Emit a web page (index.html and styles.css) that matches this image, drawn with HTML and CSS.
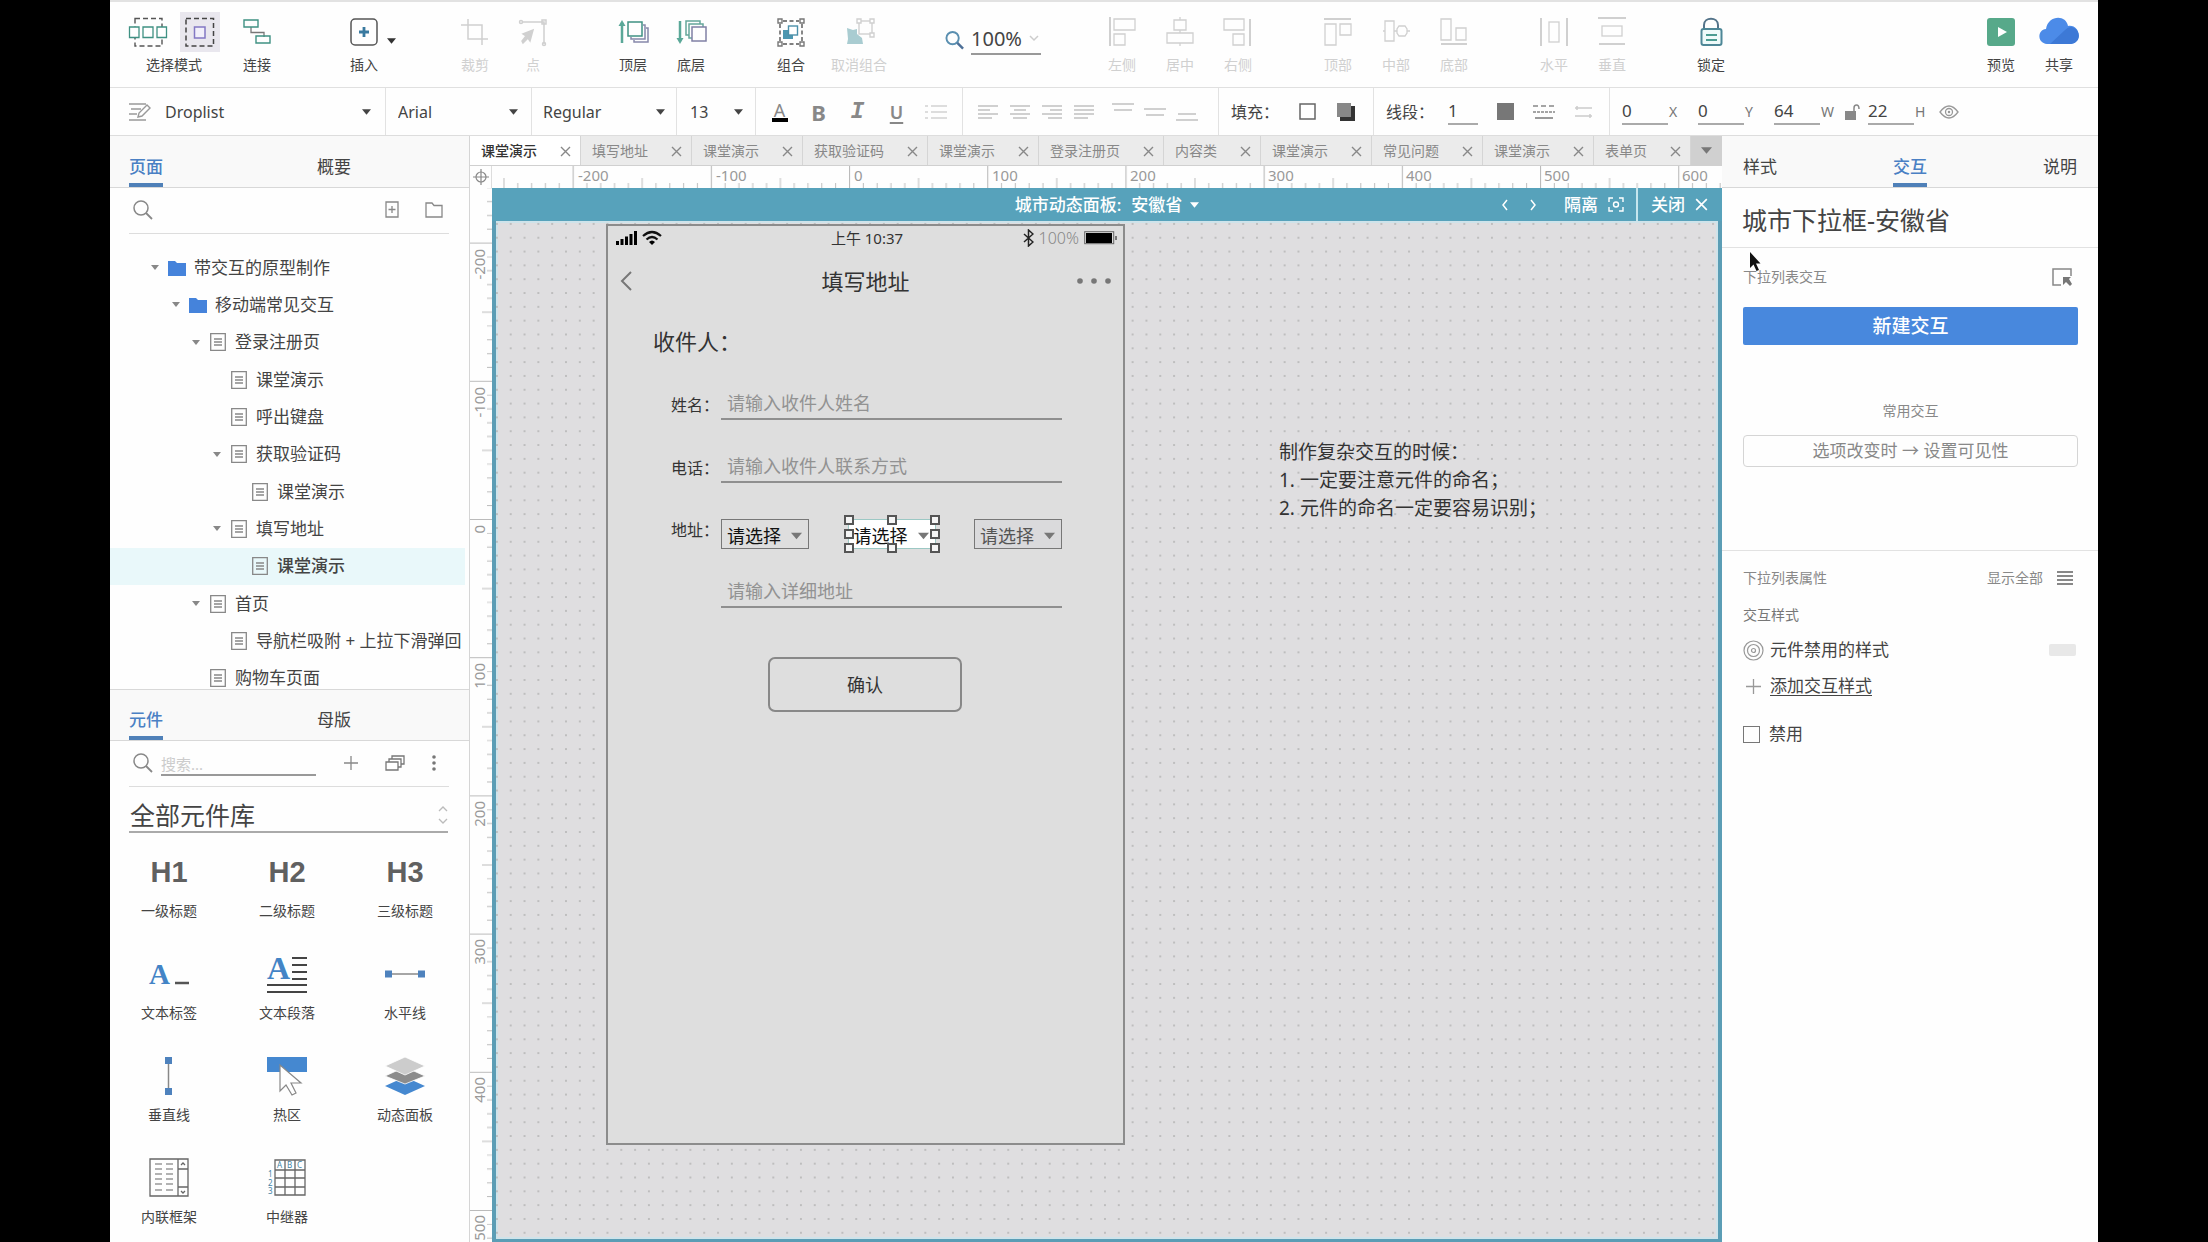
FILE: index.html
```html
<!DOCTYPE html>
<html lang="zh-CN">
<head>
<meta charset="utf-8">
<title>课堂演示</title>
<meta name="viewport" content="width=device-width, initial-scale=1">
<link rel="stylesheet" href="styles.css">
</head>
<body>
<svg class="defs" width="0" height="0" aria-hidden="true">
  <symbol id="caret" viewBox="0 0 10 6"><path d="M0 0H10L5 6Z" fill="currentColor"/></symbol>
  <symbol id="close" viewBox="0 0 11 11"><path d="M1 1L10 10M10 1L1 10" fill="none" stroke="currentColor" stroke-width="1.4"/></symbol>
  <symbol id="page" viewBox="0 0 18 20"><path d="M1.7 1.7H16.3V18.3H1.7ZM5 7H13M5 10H13M5 13H13" fill="none" stroke="currentColor" stroke-width="1.3"/></symbol>
  <symbol id="folder" viewBox="0 0 18 16"><path d="M0 1H7L9 3H18V16H0Z" fill="#4583db"/></symbol>
  <symbol id="search" viewBox="0 0 20 20"><circle cx="8" cy="8" r="7" fill="none" stroke="currentColor" stroke-width="1.5"/><path d="M13 13L19 19" stroke="currentColor" stroke-width="1.8"/></symbol>
</svg>
<div class="app">
  <header class="toolbar">
    <div class="group modes">
      <div class="pair">
        <button aria-label="相交选择"><svg width="40" height="40" viewBox="0 0 40 40"><path d="M7 6.5H34V34H7Z" fill="none" stroke="#555" stroke-width="1.4" stroke-dasharray="5 3"/><g fill="#fff" stroke="#3f9183" stroke-width="1.3"><path d="M1.5 15H11V25.500H1.500Z"/><path d="M15 15H25V25.500H15Z"/><path d="M29 15H38.500V25.500H29Z"/></g></svg></button>
        <button class="on" aria-label="包含选择"><svg width="40" height="40" viewBox="0 0 40 40"><path d="M6 6.500H33.500V34H6Z" fill="none" stroke="#444" stroke-width="1.500" stroke-dasharray="5 3"/><path d="M14.500 15H25V26H14.500Z" fill="#f1effa" stroke="#8378c4" stroke-width="1.500"/></svg></button>
      </div>
      <span>选择模式</span>
    </div>
    <button class="tool"><svg width="40" height="40" viewBox="0 0 40 40" fill="none"><path d="M14 15V20.500H27V25" stroke="#777" stroke-width="1.300"/><path d="M7 8H21V15H7ZM19 24H33V31H19Z" stroke="#3f9183" stroke-width="1.400"/></svg>连接</button>
    <div class="group insert">
      <button class="tool"><svg width="40" height="40" viewBox="0 0 40 40" fill="none"><rect x="7" y="7" width="26" height="26" rx="4" stroke="#555" stroke-width="1.500"/><path d="M20 15V25M15 20H25" stroke="#39799f" stroke-width="2.800"/></svg>插入</button>
      <button class="drop" aria-label="更多插入"><svg width="9" height="6"><use href="#caret"/></svg></button>
    </div>
    <div class="group">
      <button class="tool" disabled><svg width="40" height="40" viewBox="0 0 40 40" fill="none" stroke="currentColor" stroke-width="1.500"><path d="M13 7V27H33M6 13H27V33"/></svg>裁剪</button>
      <button class="tool" disabled><svg width="40" height="40" viewBox="0 0 40 40" fill="none" stroke="currentColor" stroke-width="1.500"><path d="M9 10H31V32"/><path d="M20 18L17 29L15 26L10 31L9 29L13 24L10 22Z" fill="currentColor"/><circle cx="8" cy="10" r="1.500"/><path d="M29 8H33V12H29Z"/><circle cx="31" cy="32" r="1.500"/></svg>点</button>
    </div>
    <div class="group">
      <button class="tool"><svg width="40" height="40" viewBox="0 0 40 40" fill="none" stroke-width="1.500"><path d="M9 31V11" stroke="#5aa898" stroke-width="2.500"/><path d="M5.500 14L9 8L12.500 14Z" fill="#5aa898"/><g stroke="#8788aa"><path d="M18 25V27H32V13H30M21 28V30H35V16H33"/></g><rect x="15" y="10" width="14" height="14" stroke="#3f9183"/></svg>顶层</button>
      <button class="tool"><svg width="40" height="40" viewBox="0 0 40 40" fill="none" stroke-width="1.500"><path d="M9 9V28" stroke="#5aa898" stroke-width="2.500"/><path d="M5.500 26L9 32L12.500 26Z" fill="#5aa898"/><path d="M18 23H15V9H29V12M21 26H18V12H32V15" stroke="#65a79b"/><rect x="21" y="15" width="14" height="14" stroke="#8080a5"/></svg>底层</button>
    </div>
    <div class="group">
      <button class="tool"><svg width="40" height="40" viewBox="0 0 40 40" fill="none" stroke-width="1.400"><path d="M12 9H28M12 32H28M9 12V29M31 12V29" stroke="#555" stroke-dasharray="4 2.500"/><path d="M7 7H11V11H7ZM29 7H33V11H29ZM7 30H11V34H7ZM29 30H33V34H29Z" stroke="#777"/><rect x="12" y="18" width="10" height="9" fill="#4d97b0"/><rect x="17.500" y="14" width="9" height="9" fill="#fff" stroke="#4a8fa9"/></svg>组合</button>
      <button class="tool wide" disabled><svg width="40" height="40" viewBox="0 0 40 40" fill="none" stroke="currentColor" stroke-width="1.400"><rect x="20" y="9" width="13" height="13"/><path d="M18 7H22V11H18ZM31 7H35V11H31ZM31 21H35V25H31Z" fill="#fff"/><path d="M8 16L14 18L18 17V22L23 26L24 32H8L9 27Z" fill="#a9ccd1" stroke="none"/></svg>取消组合</button>
    </div>
    <label class="zoom"><svg width="19" height="20" viewBox="0 0 20 20"><circle cx="8" cy="8" r="6.500" fill="none" stroke="#5a8fb0" stroke-width="2"/><path d="M13 13L19 19" stroke="#4d6f97" stroke-width="2.600"/></svg><span class="zoombox"><input value="100%" aria-label="缩放"><svg width="10" height="7" viewBox="0 0 10 7"><path d="M1 1L5 5L9 1" fill="none" stroke="#ccc" stroke-width="1.500"/></svg></span></label>
    <div class="group">
      <button class="tool" disabled><svg width="40" height="40" viewBox="0 0 40 40" fill="none" stroke="currentColor" stroke-width="1.300"><path d="M8 5V34" stroke-width="2"/><path d="M12 7H33V18H12ZM12 22H23V33H12Z"/></svg>左侧</button>
      <button class="tool" disabled><svg width="40" height="40" viewBox="0 0 40 40" fill="none" stroke="currentColor" stroke-width="1.300"><path d="M20 5V8M20 18V21M20 31V34M14 8H26V18H14ZM7 21H33V31H7Z"/></svg>居中</button>
      <button class="tool" disabled><svg width="40" height="40" viewBox="0 0 40 40" fill="none" stroke="currentColor" stroke-width="1.300"><path d="M32 7V34" stroke-width="2"/><path d="M6 7H26V18H6ZM15 22H26V33H15Z"/></svg>右侧</button>
    </div>
    <div class="group">
      <button class="tool" disabled><svg width="40" height="40" viewBox="0 0 40 40" fill="none" stroke="currentColor" stroke-width="1.300"><path d="M6 7H33" stroke-width="2"/><path d="M7 12H18V33H7ZM22 12H33V23H22Z"/></svg>顶部</button>
      <button class="tool" disabled><svg width="40" height="40" viewBox="0 0 40 40" fill="none" stroke="currentColor" stroke-width="1.300"><path d="M7 19H9M18 19H21M31 19H34M9 9H18V29H9ZM23 14H29L31 17V21L29 24H23L21 21V17Z"/></svg>中部</button>
      <button class="tool" disabled><svg width="40" height="40" viewBox="0 0 40 40" fill="none" stroke="currentColor" stroke-width="1.300"><path d="M7 32H33" stroke-width="2"/><path d="M7 7H17V28H7ZM22 16H32V28H22Z"/></svg>底部</button>
    </div>
    <div class="group">
      <button class="tool" disabled><svg width="40" height="40" viewBox="0 0 40 40" fill="none" stroke="currentColor" stroke-width="1.300"><path d="M7 6V34M33 6V34" stroke-width="2"/><rect x="15" y="10" width="10" height="20"/></svg>水平</button>
      <button class="tool" disabled><svg width="40" height="40" viewBox="0 0 40 40" fill="none" stroke="currentColor" stroke-width="1.300"><path d="M6 6H34M7 32H33" stroke-width="2"/><rect x="10" y="14" width="20" height="10"/></svg>垂直</button>
    </div>
    <button class="tool lock"><svg width="40" height="40" viewBox="0 0 40 40" fill="none"><path d="M13 18V13C13 4.500 27 4.500 27 13V18" stroke="#54748a" stroke-width="2"/><rect x="10.500" y="17" width="20" height="16" rx="2" fill="#eefafa" stroke="#4e8797" stroke-width="2"/><path d="M15 23H26M15 28H26" stroke="#4b9c92" stroke-width="2"/></svg>锁定</button>
    <div class="group end">
      <button class="tool"><svg width="40" height="40" viewBox="0 0 40 40"><rect x="6" y="6" width="28" height="28" rx="3" fill="#57a98a"/><path d="M17 15V25L26 20Z" fill="#fff"/></svg>预览</button>
      <button class="tool"><svg width="42" height="40" viewBox="0 0 42 40"><path d="M9 32C-1 31-1 18 8 17C10 3 28 2 30 14C42 12 45 30 33 32Z" fill="#4c8be8"/><path d="M12 32L27 18Q32 13 36 16C43 19 43 31 33 32Z" fill="#3d79d6"/></svg>共享</button>
    </div>
  </header>

  <div class="format">
    <div class="sec style">
      <svg width="22" height="20" viewBox="0 0 22 20" fill="none" stroke="#999" stroke-width="1.400"><path d="M0 2H17M2 7H12M0 12H8M0 18H17"/><path d="M9 15L10 11L18 3L21 6L13 14Z" fill="#fff"/></svg>
      <span class="pick"><select aria-label="样式"><option>Droplist</option></select><svg width="9" height="6"><use href="#caret"/></svg></span>
    </div>
    <div class="sec font"><span class="pick"><select aria-label="字体"><option>Arial</option></select><svg width="9" height="6"><use href="#caret"/></svg></span></div>
    <div class="sec weight"><span class="pick"><select aria-label="字重"><option>Regular</option></select><svg width="9" height="6"><use href="#caret"/></svg></span></div>
    <div class="sec size"><span class="pick"><select aria-label="字号"><option>13</option></select><svg width="9" height="6"><use href="#caret"/></svg></span></div>
    <div class="sec marks">
      <button aria-label="文字颜色"><span class="ink">A</span></button>
      <button class="b">B</button>
      <button class="it">I</button>
      <button class="u">U</button>
      <button class="dim" aria-label="列表"><svg width="22" height="16" viewBox="0 0 22 16" stroke="currentColor" stroke-width="2"><path d="M0 2H3M0 8H3M0 14H3M6 2H22M6 8H22M6 14H22"/></svg></button>
    </div>
    <div class="sec aligns">
      <button aria-label="左对齐"><svg width="20" height="16" viewBox="0 0 20 16" stroke="currentColor" stroke-width="1.800"><path d="M0 2H20M0 6H12M0 10H20M0 14H14"/></svg></button>
      <button aria-label="居中对齐"><svg width="20" height="16" viewBox="0 0 20 16" stroke="currentColor" stroke-width="1.800"><path d="M0 2H20M4 6H16M0 10H20M3 14H17"/></svg></button>
      <button aria-label="右对齐"><svg width="20" height="16" viewBox="0 0 20 16" stroke="currentColor" stroke-width="1.800"><path d="M0 2H20M8 6H20M0 10H20M6 14H20"/></svg></button>
      <button aria-label="两端对齐"><svg width="20" height="16" viewBox="0 0 20 16" stroke="currentColor" stroke-width="1.800"><path d="M0 2H20M0 6H20M0 10H20M0 14H14"/></svg></button>
      <button class="gap" aria-label="顶端"><svg width="22" height="20" viewBox="0 0 22 20" stroke="currentColor" stroke-width="1.800"><path d="M0 2H22M2 8H20"/></svg></button>
      <button aria-label="中部"><svg width="22" height="20" viewBox="0 0 22 20" stroke="currentColor" stroke-width="1.800"><path d="M0 7H22M2 13H20"/></svg></button>
      <button aria-label="底端"><svg width="22" height="20" viewBox="0 0 22 20" stroke="currentColor" stroke-width="1.800"><path d="M2 12H20M0 18H22"/></svg></button>
    </div>
    <div class="sec fill"><span class="name">填充：</span>
      <button aria-label="填充颜色"><svg width="18" height="18"><rect x="1" y="1" width="15" height="15" fill="#fff" stroke="#666" stroke-width="1.500"/></svg></button>
      <button aria-label="阴影"><svg width="18" height="18"><path d="M3 3H18V18H3Z" fill="#333"/><path d="M0 0H14V14H0Z" fill="#888"/></svg></button>
    </div>
    <div class="sec line"><label class="name" for="lw">线段：</label><input id="lw" class="num short" value="1">
      <button aria-label="线段颜色"><svg width="17" height="17"><rect width="17" height="17" fill="#777"/></svg></button>
      <button aria-label="线型"><svg width="22" height="16" viewBox="0 0 22 16" fill="none" stroke="#888" stroke-width="1.700"><path d="M0 2H22" stroke-dasharray="5 3"/><path d="M0 8H22" stroke-dasharray="3 1"/><path d="M2 14H20"/></svg></button>
      <button aria-label="箭头"><svg width="20" height="16" viewBox="0 0 20 16" fill="none" stroke="#ccc" stroke-width="1.500"><path d="M1 4H18M3 2V6M1 12H18M16 10V14"/></svg></button>
    </div>
    <div class="sec coords">
      <label><input class="num" value="0">X</label>
      <label><input class="num" value="0">Y</label>
      <label class="w"><input class="num" value="64">W</label>
      <button class="ratio" aria-label="锁定比例"><svg width="15" height="16" viewBox="0 0 15 16"><path d="M0 7H11V16H0Z" fill="#888"/><path d="M9 7V4Q9 1 11.500 1Q14 1 14 5" fill="none" stroke="#888" stroke-width="1.500"/></svg></button>
      <label class="w"><input class="num" value="22">H</label>
      <button class="eye" aria-label="隐藏"><svg width="20" height="14" viewBox="0 0 20 14" fill="none" stroke="#999" stroke-width="1.300"><path d="M1 7Q10-5 19 7Q10 19 1 7Z"/><circle cx="10" cy="7" r="3.500"/><circle cx="10" cy="7" r=".6"/></svg></button>
    </div>
  </div>

  <main class="work">
    <aside class="left">
      <section class="pane pages">
        <nav class="heads"><button class="on">页面</button><button>概要</button></nav>
        <div class="find">
          <button aria-label="搜索页面"><svg width="20" height="20"><use href="#search"/></svg></button>
          <button class="push" aria-label="添加页面"><svg width="14" height="17" viewBox="0 0 14 17" fill="none" stroke="#888" stroke-width="1.300"><path d="M1 1H13V16H1ZM7 5V12M3.500 8.500H10.500"/></svg></button>
          <button aria-label="添加文件夹"><svg width="18" height="16" viewBox="0 0 18 16" fill="none" stroke="#888" stroke-width="1.300"><path d="M1 1H7L9 3.500H17V15H1Z"/></svg></button>
        </div>
        <ul class="tree">
          <li class="l0"><svg class="tw" width="8" height="7"><use href="#caret"/></svg><svg width="18" height="16"><use href="#folder"/></svg>带交互的原型制作</li>
          <li class="l1"><svg class="tw" width="8" height="7"><use href="#caret"/></svg><svg width="18" height="16"><use href="#folder"/></svg>移动端常见交互</li>
          <li class="l2"><svg class="tw" width="8" height="7"><use href="#caret"/></svg><svg width="18" height="20"><use href="#page"/></svg>登录注册页</li>
          <li class="l3"><i class="tw"></i><svg width="18" height="20"><use href="#page"/></svg>课堂演示</li>
          <li class="l3"><i class="tw"></i><svg width="18" height="20"><use href="#page"/></svg>呼出键盘</li>
          <li class="l3"><svg class="tw" width="8" height="7"><use href="#caret"/></svg><svg width="18" height="20"><use href="#page"/></svg>获取验证码</li>
          <li class="l4"><i class="tw"></i><svg width="18" height="20"><use href="#page"/></svg>课堂演示</li>
          <li class="l3"><svg class="tw" width="8" height="7"><use href="#caret"/></svg><svg width="18" height="20"><use href="#page"/></svg>填写地址</li>
          <li class="l4 cur"><i class="tw"></i><svg width="18" height="20"><use href="#page"/></svg>课堂演示</li>
          <li class="l2"><svg class="tw" width="8" height="7"><use href="#caret"/></svg><svg width="18" height="20"><use href="#page"/></svg>首页</li>
          <li class="l3"><i class="tw"></i><svg width="18" height="20"><use href="#page"/></svg>导航栏吸附 + 上拉下滑弹回</li>
          <li class="l2"><i class="tw"></i><svg width="18" height="20"><use href="#page"/></svg>购物车页面</li>
        </ul>
      </section>
      <section class="pane widgets">
        <nav class="heads"><button class="on">元件</button><button>母版</button></nav>
        <div class="find lib">
          <svg width="20" height="20"><use href="#search"/></svg>
          <input type="text" placeholder="搜索..." aria-label="搜索元件">
          <button class="push" aria-label="添加"><svg width="14" height="14" viewBox="0 0 14 14" stroke="#888" stroke-width="1.300"><path d="M7 0V14M0 7H14"/></svg></button>
          <button aria-label="元件库"><svg width="20" height="17" viewBox="0 0 20 17" fill="#fff" stroke="#777" stroke-width="1.300"><path d="M7 1H19V9H7Z"/><path d="M4 4H16V12H4Z"/><path d="M1 7H13V15H1Z"/></svg></button>
          <button aria-label="选项"><svg width="4" height="16" fill="#777"><circle cx="2" cy="2" r="1.800"/><circle cx="2" cy="8" r="1.800"/><circle cx="2" cy="14" r="1.800"/></svg></button>
        </div>
        <div class="library"><select aria-label="元件库"><option>全部元件库</option></select><svg width="10" height="18" viewBox="0 0 10 18" fill="none" stroke="#bbb" stroke-width="1.300"><path d="M1 5L5 1L9 5M1 13L5 17L9 13"/></svg></div>
        <ul class="grid">
          <li><b>H1</b>一级标题</li>
          <li><b>H2</b>二级标题</li>
          <li><b>H3</b>三级标题</li>
          <li><span class="art"><span class="glyph low">A</span><svg width="15" height="30"><path d="M1 28H15" stroke="#555" stroke-width="2.500"/></svg></span>文本标签</li>
          <li><span class="art para"><span class="glyph">A</span><svg width="15" height="26" stroke="#444" stroke-width="2"><path d="M0 4H15M0 11H15M0 18H15M0 25H15"/></svg><svg class="under" width="40" height="10" stroke="#444" stroke-width="2.200"><path d="M0 2H40M0 9H40"/></svg></span>文本段落</li>
          <li><svg width="40" height="44" viewBox="0 0 40 44"><path d="M4 22H36" stroke="#888" stroke-width="1.500"/><path d="M0 18.500H7V25.500H0ZM33 18.500H40V25.500H33Z" fill="#4e82bd"/></svg>水平线</li>
          <li><svg width="40" height="44" viewBox="0 0 40 44"><path d="M19.500 6V38" stroke="#888" stroke-width="1.500"/><path d="M16 3H23V10H16ZM16 34H23V41H16Z" fill="#4e82bd"/></svg>垂直线</li>
          <li><svg width="40" height="44" viewBox="0 0 40 44"><path d="M0 3H40V18H0Z" fill="#4588d0"/><path d="M13 11V37L19 31L25 41L29 39L24 29H34Z" fill="#fff" stroke="#888" stroke-width="1.200"/></svg>热区</li>
          <li><svg width="40" height="44" viewBox="0 0 40 44"><path d="M0 32L20 23L40 32L20 41Z" fill="#4588d0"/><path d="M0 22L20 13L40 22L20 30Z" fill="#8c8c8c" stroke="#fff" stroke-width=".8"/><path d="M0 12L20 3L40 12L20 21Z" fill="#ccc" stroke="#fff" stroke-width=".8"/></svg>动态面板</li>
          <li><svg width="40" height="44" viewBox="0 0 40 44" fill="none" stroke="#666" stroke-width="1.300"><path d="M1 3H39V40H1ZM29 3V40M29 13H39M29 31H39M32 9L34 7L36 9M32 35L34 37L36 35"/><path d="M6 8H13M17 8H24M6 13H13M17 13H24M6 18H13M17 18H24M6 23H13M17 23H24M6 28H13M17 28H24M6 34H13M17 34H24" stroke="#999"/></svg>内联框架</li>
          <li><svg width="40" height="44" viewBox="0 0 40 44" fill="none" stroke="#666" stroke-width="1.300"><path d="M8 4H38V39H8ZM8 14H38M8 22H38M8 31H38M18 4V39M28 4V39"/><g class="tiny"><text x="10" y="12">A</text><text x="20" y="12">B</text><text x="30" y="12">C</text><text x="1" y="21">1</text><text x="1" y="30">2</text><text x="1" y="38">3</text></g></svg>中继器</li>
        </ul>
      </section>
    </aside>

    <section class="center">
      <nav class="tabs">
        <div class="tab on">课堂演示<button aria-label="关闭"><svg width="11" height="11"><use href="#close"/></svg></button></div>
        <div class="tab">填写地址<button aria-label="关闭"><svg width="11" height="11"><use href="#close"/></svg></button></div>
        <div class="tab">课堂演示<button aria-label="关闭"><svg width="11" height="11"><use href="#close"/></svg></button></div>
        <div class="tab">获取验证码<button aria-label="关闭"><svg width="11" height="11"><use href="#close"/></svg></button></div>
        <div class="tab">课堂演示<button aria-label="关闭"><svg width="11" height="11"><use href="#close"/></svg></button></div>
        <div class="tab">登录注册页<button aria-label="关闭"><svg width="11" height="11"><use href="#close"/></svg></button></div>
        <div class="tab">内容类<button aria-label="关闭"><svg width="11" height="11"><use href="#close"/></svg></button></div>
        <div class="tab">课堂演示<button aria-label="关闭"><svg width="11" height="11"><use href="#close"/></svg></button></div>
        <div class="tab">常见问题<button aria-label="关闭"><svg width="11" height="11"><use href="#close"/></svg></button></div>
        <div class="tab">课堂演示<button aria-label="关闭"><svg width="11" height="11"><use href="#close"/></svg></button></div>
        <div class="tab">表单页<button aria-label="关闭"><svg width="11" height="11"><use href="#close"/></svg></button></div>
        <button class="more" aria-label="全部标签"><svg width="11" height="7"><use href="#caret"/></svg></button>
      </nav>
      <div class="origin"><svg width="16" height="16" viewBox="0 0 16 16" fill="none" stroke="#888" stroke-width="1.200"><circle cx="8" cy="8" r="5"/><path d="M8 0V16M0 8H16"/></svg></div>
      <svg class="ruler top">
        <pattern id="tx" width="100" height="22" patternUnits="userSpaceOnUse" patternTransform="translate(357 0) scale(1.382 1)"><path fill="#bbb" d="M0 0H.8V22H0ZM10 17h.7v5h-.7zM20 17h.7v5h-.7zM30 17h.7v5h-.7zM40 17h.7v5h-.7zM50 12h.7v10h-.7zM60 17h.7v5h-.7zM70 17h.7v5h-.7zM80 17h.7v5h-.7zM90 17h.7v5h-.7z"/></pattern>
        <rect width="100%" height="22" fill="url(#tx)"/>
        <g><text x="86" y="15">-200</text><text x="224" y="15">-100</text><text x="362" y="15">0</text><text x="500" y="15">100</text><text x="638" y="15">200</text><text x="776" y="15">300</text><text x="914" y="15">400</text><text x="1052" y="15">500</text><text x="1190" y="15">600</text></g>
      </svg>
      <svg class="ruler side">
        <pattern id="ty" width="22" height="100" patternUnits="userSpaceOnUse" patternTransform="translate(0 331) scale(1 1.382)"><path fill="#bbb" d="M0 0H22V.8H0ZM17 10h5v.7h-5zM17 20h5v.7h-5zM17 30h5v.7h-5zM17 40h5v.7h-5zM12 50h10v.7h-10zM17 60h5v.7h-5zM17 70h5v.7h-5zM17 80h5v.7h-5zM17 90h5v.7h-5z"/></pattern>
        <rect width="22" height="100%" fill="url(#ty)"/>
        <g text-anchor="end"><text transform="translate(15 61) rotate(-90)">-200</text><text transform="translate(15 199) rotate(-90)">-100</text><text transform="translate(15 337) rotate(-90)">0</text><text transform="translate(15 475) rotate(-90)">100</text><text transform="translate(15 613) rotate(-90)">200</text><text transform="translate(15 751) rotate(-90)">300</text><text transform="translate(15 889) rotate(-90)">400</text><text transform="translate(15 1027) rotate(-90)">500</text></g>
      </svg>
      <div class="stage">
        <div class="bar">
          <div class="state"><span>城市动态面板:</span><button>安徽省<svg width="9" height="6"><use href="#caret"/></svg></button></div>
          <div class="ops">
            <button aria-label="上一个"><svg width="8" height="12" viewBox="0 0 8 12"><path d="M6 1L2 6L6 11" fill="none" stroke="currentColor" stroke-width="1.500"/></svg></button>
            <button aria-label="下一个"><svg width="8" height="12" viewBox="0 0 8 12"><path d="M2 1L6 6L2 11" fill="none" stroke="currentColor" stroke-width="1.500"/></svg></button>
            <button class="iso">隔离<svg width="16" height="15" viewBox="0 0 16 15" fill="none" stroke="currentColor" stroke-width="1.400"><path d="M1 5V1H5M11 1H15V5M15 10V14H11M5 14H1V10"/><circle cx="8" cy="7.500" r="2.500"/></svg></button>
            <button class="shut">关闭<svg width="13" height="13"><use href="#close"/></svg></button>
          </div>
        </div>
        <div class="canvas">
          <svg class="dots"><pattern id="dt" width="10" height="10" patternUnits="userSpaceOnUse" patternTransform="translate(-6 -4) scale(1.382)"><circle cx="5" cy="5" r=".8" fill="#b6b6b6"/></pattern><rect width="100%" height="100%" fill="url(#dt)"/></svg>
          <article class="phone">
            <div class="status">
              <svg width="46" height="16" viewBox="0 0 46 16"><path d="M0 11H3V15H0ZM4.500 9H7.500V15H4.500ZM9 6.500H12V15H9ZM13.500 4H16.500V15H13.500ZM18 1H21V15H18Z"/><g fill="none" stroke="#111" stroke-width="2.200"><path d="M27 6Q36-2 45 6"/><path d="M30.500 9.500Q36 4.500 41.500 9.500"/></g><path d="M33 12Q36 9 39 12L36 15Z"/></svg>
              <span>上午 10:37</span>
              <span class="power"><svg width="11" height="18" viewBox="0 0 11 18"><path d="M1 5L10 13L5.500 17V1L10 5L1 13" fill="none" stroke="#222" stroke-width="1.500"/></svg>100%<svg width="34" height="16" viewBox="0 0 34 16"><rect x=".7" y="1.700" width="29" height="12" fill="none" stroke="#666"/><rect x="2" y="3" width="26" height="10"/><path d="M31 6H33V10H31Z" fill="#777"/></svg></span>
            </div>
            <div class="navbar">
              <button aria-label="返回"><svg width="12" height="20" viewBox="0 0 12 20"><path d="M11 1L2 10L11 19" fill="none" stroke="#777" stroke-width="2"/></svg></button>
              <h2>填写地址</h2>
              <button aria-label="更多"><svg width="34" height="6" fill="#777"><circle cx="3" cy="3" r="2.800"/><circle cx="17" cy="3" r="2.800"/><circle cx="31" cy="3" r="2.800"/></svg></button>
            </div>
            <form class="form">
              <h3>收件人：</h3>
              <label for="nm">姓名：</label><input id="nm" type="text" placeholder="请输入收件人姓名">
              <label for="ph">电话：</label><input id="ph" type="text" placeholder="请输入收件人联系方式">
              <label for="pv">地址：</label>
              <div class="choices">
                <span class="choice"><select id="pv"><option>请选择</option></select><svg width="11" height="8"><use href="#caret"/></svg></span>
                <span class="choice sel"><select aria-label="城市"><option>请选择</option></select><svg width="11" height="8"><use href="#caret"/></svg><i class="h n w"></i><i class="h n c"></i><i class="h n e"></i><i class="h m w"></i><i class="h m e"></i><i class="h s w"></i><i class="h s c"></i><i class="h s e"></i></span>
                <span class="choice off"><select aria-label="区县"><option>请选择</option></select><svg width="11" height="8"><use href="#caret"/></svg></span>
              </div>
              <input class="detail" type="text" placeholder="请输入详细地址" aria-label="详细地址">
              <button class="ok" type="button">确认</button>
            </form>
          </article>
          <p class="note">制作复杂交互的时候：<br>1. 一定要注意元件的命名；<br>2. 元件的命名一定要容易识别；</p>
        </div>
      </div>
    </section>

    <aside class="right">
      <nav class="heads"><button>样式</button><button class="on">交互</button><button>说明</button></nav>
      <h1>城市下拉框-安徽省</h1>
      <section class="acts">
        <div class="row top"><span>下拉列表交互</span><svg width="20" height="18" viewBox="0 0 20 18"><path d="M19 8V1H1V17H9" fill="none" stroke="#888" stroke-width="1.500"/><path d="M11 9H19L17 11L20 16L18 18L14 14L11 17Z" fill="#777"/></svg></div>
        <button class="primary">新建交互</button>
        <p>常用交互</p>
        <button class="ghost">选项改变时 → 设置可见性</button>
      </section>
      <section class="props">
        <div class="row"><span>下拉列表属性</span><button class="all">显示全部<svg width="16" height="14" stroke="#888" stroke-width="2"><path d="M0 1H16M0 5H16M0 9H16M0 13H16"/></svg></button></div>
        <h4>交互样式</h4>
        <div class="row item"><svg width="21" height="21" viewBox="0 0 21 21" fill="none" stroke="#999" stroke-width="1.200"><circle cx="10.500" cy="10.500" r="9.500"/><circle cx="10.500" cy="10.500" r="6"/><circle cx="10.500" cy="10.500" r="2"/></svg><span>元件禁用的样式</span><i class="chip"></i></div>
        <div class="row item"><svg width="21" height="21" viewBox="0 0 21 21" stroke="#999" stroke-width="1.300"><path d="M10.500 3V18M3 10.500H18"/></svg><a href="#">添加交互样式</a></div>
        <label class="check"><input type="checkbox">禁用</label>
      </section>
      <svg class="cursor" width="12" height="21" viewBox="0 0 12 21"><path d="M1 1V17L4.500 13.500L7.500 20L10 19L7 12.500H11.500Z" fill="#111"/></svg>
    </aside>
  </main>
</div>
</body>
</html>
```
FILE: styles.css
```css
* { box-sizing: border-box; }
body {
  margin: 0;
  background: #000;
  color: #444;
  font: 17px/24px "Noto Sans", "Noto Sans CJK SC", sans-serif;
}
button, input, select {
  margin: 0;
  padding: 0;
  border: 0;
  border-radius: 0;
  background: none;
  color: inherit;
  font: inherit;
  outline: 0;
}
select { appearance: none; }
ul { margin: 0; padding: 0; list-style: none; }
h1, h2, h3, h4, p { margin: 0; font-weight: 400; }
svg { display: block; flex: none; }
.defs { position: absolute; }
.app {
  display: grid;
  grid-template-rows: 88px 48px minmax(0, 1fr);
  height: 100vh;
  margin: 0 110px;
  background: #fefefe;
  overflow: hidden;
}

/* main toolbar */
.toolbar {
  display: flex;
  align-items: flex-start;
  padding: 10px 10px 0 18px;
  border-top: 2px solid #e2e2e2;
  border-bottom: 1px solid #e0e0e0;
  font-size: 14px;
  line-height: 20px;
  white-space: nowrap;
}
.group { display: flex; margin-left: 42px; }
.group.modes { flex-direction: column; align-items: center; gap: 3px; margin: 0 8px 0 0; }
.pair { display: flex; gap: 12px; }
.pair .on { background: #e9e7ee; }
.tool { display: flex; flex-direction: column; align-items: center; gap: 3px; width: 58px; }
.tool.wide { width: 78px; }
.tool:disabled { color: #d0d0d0; }
.insert { padding: 0 8px 0 13px; }
.insert .tool { width: 46px; }
.drop { height: 58px; color: #333; }
.zoom { display: flex; align-items: center; gap: 7px; margin: 12px 10px 0 47px; }
.zoombox { display: flex; align-items: center; width: 70px; height: 31px; border-bottom: 2px solid #999; }
.zoom input { width: 58px; font-size: 20px; line-height: 28px; }
.lock { margin-left: 41px; }
.end { margin-left: auto; }

/* format bar */
.format { display: flex; border-bottom: 1px solid #ddd; font-size: 16px; white-space: nowrap; }
.sec { display: flex; align-items: center; flex: none; border-right: 1px solid #e2e2e2; }
.sec.style { width: 276px; padding: 0 14px 0 19px; gap: 14px; }
.sec.font { width: 146px; padding: 0 13px 0 12px; }
.sec.weight { width: 145px; padding: 0 11px 0 11px; }
.sec.size { width: 79px; padding: 0 12px 0 13px; }
.pick { display: flex; align-items: center; flex: 1; }
.pick select { flex: 1; min-width: 0; }
.marks { width: 207px; padding-left: 4px; color: #888; }
.marks button { display: grid; place-items: center; width: 39px; height: 28px; }
.marks .ink { width: 16px; height: 20px; border-bottom: 4px solid #000; line-height: 17px; font-size: 18px; text-align: center; }
.marks .b { font-weight: 700; font-size: 22px; }
.marks .it { font: italic 700 23px "Liberation Mono", monospace; }
.marks .u { font-weight: 600; font-size: 18px; text-decoration: underline; text-underline-offset: 3px; text-decoration-thickness: 2px; }
.marks .dim { color: #ddd; }
.aligns { width: 256px; padding-left: 9px; color: #d0d0d0; }
.aligns button { display: grid; place-items: center; width: 32px; }
.aligns .gap { margin-left: 7px; }
.fill { width: 155px; padding-left: 12px; gap: 20px; }
.line { width: 236px; padding-left: 12px; gap: 19px; }
.line .name { margin-right: -5px; }
.num { width: 46px; height: 26px; border-bottom: 2px solid #aaa; font-size: 17px; }
.num.short { width: 30px; }
.coords { border: 0; padding-left: 12px; color: #777; font-size: 14px; }
.coords label { display: flex; align-items: center; gap: 1px; width: 76px; }
.coords .num { color: #444; }
.coords .w { width: 71px; }
.coords .ratio { width: 23px; }

/* shared tab heads */
.heads { display: flex; flex: none; height: 52px; border-bottom: 1px solid #d8d8d8; background: #f9f9f9; }
.heads button { padding: 14px 0 0; height: 51px; border-bottom: 4px solid transparent; }
.heads .on { color: #4a80c4; border-color: #4f80b8; font-weight: 500; }
.left .heads { padding-left: 19px; gap: 154px; }
.right .heads { padding: 0 21px; justify-content: space-between; }

.work { display: grid; grid-template-columns: 360px minmax(0, 1fr) 376px; min-height: 0; }

/* left column */
.left { display: flex; flex-direction: column; min-height: 0; border-right: 1px solid #d5d5d5; }
.pane { flex: 1 1 0; min-height: 0; overflow: hidden; }
.find { display: flex; align-items: center; gap: 26px; height: 46px; margin: 0 20px 0 19px; padding: 0 6px 2px 4px; border-bottom: 1px solid #ddd; color: #888; }
.find .push { margin-left: auto; }
.tree { display: grid; grid-auto-rows: 1fr; height: 448px; margin-top: 15px; }
.tree li { display: flex; align-items: center; gap: 8px; margin-right: 4px; white-space: nowrap; }
.tree svg { color: #888; }
.tree .tw { width: 8px; margin-right: 1px; }
.l0 { padding-left: 41px; }
.l1 { padding-left: 62px; }
.l2 { padding-left: 82px; }
.l3 { padding-left: 103px; }
.l4 { padding-left: 124px; }
.tree .cur { background: #e9f8fa; font-weight: 500; }
.widgets { border-top: 1px solid #d8d8d8; }
.widgets .heads { height: 51px; }
.widgets .heads button { height: 50px; }
.find.lib { gap: 27px; height: 46px; padding: 0 13px 0 4px; }
.lib input { width: 155px; height: 26px; margin-left: -19px; padding-top: 3px; border-bottom: 2px solid #999; font-size: 15px; }
.lib input::placeholder { color: #ccc; }
.library { display: flex; align-items: center; height: 46px; margin: 0 21px 17px 19px; padding-top: 12px; border-bottom: 2px solid #aaa; }
.library select { flex: 1; height: 34px; padding-left: 1px; font-size: 25px; line-height: 34px; }
.grid { display: grid; grid-template-columns: repeat(3, minmax(0, 1fr)); grid-auto-rows: 102px; margin-right: 5px; font-size: 14px; line-height: 20px; }
.grid li { display: flex; flex-direction: column; align-items: center; gap: 7px; }
.grid b { height: 44px; color: #606060; font: 700 29px/44px "Liberation Sans", sans-serif; }
.art { display: flex; align-items: flex-end; gap: 4px; height: 44px; padding-bottom: 11px; }
.glyph { color: #4384c6; font: 700 32px/26px "Liberation Serif", serif; }
.glyph.low { font-size: 29px; line-height: 22px; }
.art.para { flex-wrap: wrap; gap: 3px; width: 40px; padding: 0; align-content: center; }
.art.para .glyph { width: 22px; line-height: 24px; }
.tiny { font: 8px "Noto Sans", sans-serif; fill: #4384a6; stroke: none; }

/* document tabs, rulers */
.center { display: grid; grid-template: 30px 22px minmax(0, 1fr) / 22px minmax(0, 1fr); min-width: 0; min-height: 0; }
.tabs { display: flex; grid-column: 1 / -1; overflow: hidden; background: #ebebeb; border-bottom: 1px solid #d0d0d0; color: #888; font-size: 14px; white-space: nowrap; }
.tab { display: flex; align-items: center; flex: none; padding: 1px 9px 0 11px; gap: 23px; border-right: 1px solid #d5d5d5; }
.tab.on { background: #fff; color: #333; font-weight: 500; }
.tab button { color: #888; }
.more { display: grid; place-items: center; flex: 1; min-width: 31px; background: #d0d0d0; color: #777; }
.origin { display: grid; place-items: center; border-right: 1px solid #ddd; }
.ruler { overflow: hidden; font-size: 15px; fill: #999; }
.ruler.top { width: 100%; height: 22px; }
.ruler.side { width: 22px; height: 100%; }

/* stage */
.stage { display: flex; flex-direction: column; min-width: 0; min-height: 0; }
.bar { display: grid; grid-template-columns: 1fr auto 1fr; align-items: center; flex: none; height: 33px; background: #57a2bb; color: #fff; font-weight: 500; }
.state { display: flex; grid-column: 2; gap: 10px; }
.state button { display: flex; align-items: center; gap: 8px; font-weight: 500; }
.ops { display: flex; justify-self: end; align-items: center; gap: 20px; }
.ops button { display: flex; align-items: center; gap: 10px; height: 33px; font-weight: 500; }
.iso { padding-right: 12px; margin-left: 7px; }
.ops .shut { padding: 0 14px 0 13px; margin-left: -20px; border-left: 2px solid #c5e6ee; }
.canvas { position: relative; flex: 1; min-height: 0; overflow: hidden; border: solid #5b9db5; border-width: 0 4px 3px; background: #dfdee0; box-shadow: inset 0 0 0 2px #cfe3ea; }
.dots { width: 100%; height: 100%; }
.note { position: absolute; left: 783px; top: 217px; font-size: 19px; line-height: 28px; color: #333; white-space: nowrap; }

/* phone mock-up on the canvas */
.phone { position: absolute; left: 110px; top: 3px; width: 519px; height: 921px; border: 2px solid #8c8c8c; background: #dedede; color: #333; }
.status { display: grid; grid-template-columns: 1fr auto 1fr; align-items: center; height: 24px; padding: 0 5px 0 8px; font-size: 15px; }
.power { display: flex; justify-self: end; align-items: center; gap: 5px; color: #888; font-size: 16px; font-weight: 300; }
.navbar { display: grid; grid-template-columns: 1fr auto 1fr; align-items: center; height: 62px; padding: 0 12px; }
.navbar h2 { font-size: 22px; }
.navbar button:last-child { justify-self: end; }
.form { display: grid; grid-template-columns: 50px 341px; padding: 14px 0 0 63px; font-size: 16px; }
.form h3 { grid-column: 1 / -1; margin: 0 0 32px -18px; font-size: 22px; line-height: 30px; }
.form label { height: 34px; line-height: 34px; }
.form input { height: 32px; margin-bottom: 31px; padding: 0 6px; border-bottom: 2px solid #8f8f8f; font-size: 18px; }
.form input::placeholder { color: #929292; }
.choices { display: flex; justify-content: space-between; height: 30px; margin: 5px 0 27px; }
.form label[for="pv"] { height: 30px; margin-top: 3px; line-height: 26px; }
.choice { position: relative; display: flex; align-items: center; width: 88px; padding: 3px 6px 0 5px; border: 1px solid #777; font-size: 18px; color: #111; }
.choice select { flex: 1; min-width: 0; height: 26px; }
.choice svg { color: #777; }
.choice.sel { background: #fff; border-color: #9cc8c4; }
.choice.off { color: #555; background: #dadadc; }
.h { position: absolute; width: 10px; height: 10px; border: 2px solid #555; background: #f5f5f5; transform: translate(-50%, -50%); }
.h.n { top: 0; }
.h.m { top: 50%; }
.h.s { top: 100%; }
.h.w { left: 0; }
.h.c { left: 50%; }
.h.e { left: 100%; }
.form .detail { grid-column: 2; margin-bottom: 49px; }
.ok { grid-column: 1 / -1; width: 194px; height: 55px; margin-left: 97px; border: 2px solid #888; border-radius: 7px; font-size: 18px; }

/* inspector */
.right { position: relative; background: #fefefe; overflow: hidden; }
.right h1 { height: 60px; padding: 0 20px; border-bottom: 1px solid #e2e2e2; font-size: 25px; line-height: 64px; white-space: nowrap; }
.row { display: flex; align-items: center; justify-content: space-between; }
.acts { padding: 0 20px 83px 21px; border-bottom: 1px solid #e2e2e2; color: #888; font-size: 14px; line-height: 20px; }
.row.top { height: 59px; padding: 0 6px 2px 0; }
.acts button { display: block; width: 100%; }
.acts .primary { height: 38px; border-radius: 2px; background: #4888dd; color: #fff; font-size: 19px; font-weight: 500; }
.acts p { margin: 56px 0 14px; text-align: center; }
.acts .ghost { height: 32px; border: 1px solid #d5d5d5; border-radius: 4px; font-size: 17px; }
.props { padding: 17px 20px 0 21px; }
.props .row { color: #888; font-size: 14px; line-height: 20px; }
.all { display: flex; align-items: center; gap: 14px; padding-right: 5px; }
.props h4 { margin: 17px 0 7px; font-size: 14px; line-height: 20px; color: #777; }
.props .item { height: 36px; gap: 6px; justify-content: flex-start; color: #444; font-size: 17px; line-height: 24px; }
.item a { color: inherit; text-underline-offset: 3px; }
.chip { width: 27px; height: 12px; margin: 0 2px 0 auto; border-radius: 2px; background: #e8e8e8; }
.check { display: flex; align-items: center; gap: 9px; height: 36px; margin-top: 12px; }
.check input { appearance: none; width: 17px; height: 17px; border: 1px solid #777; }
.cursor { position: absolute; left: 27px; top: 115px; }
```
